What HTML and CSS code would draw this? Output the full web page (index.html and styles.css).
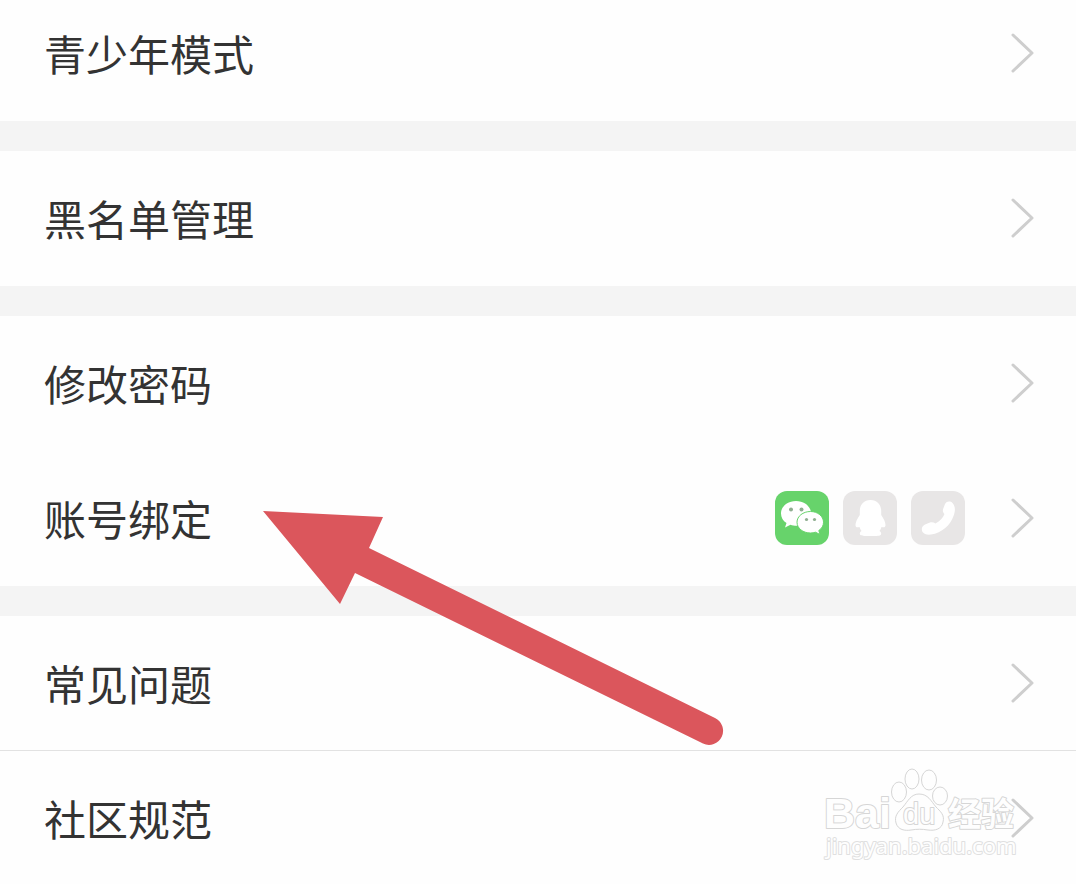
FILE: index.html
```html
<!DOCTYPE html>
<html lang="zh-CN">
<head>
    <meta charset="UTF-8">
    <meta name="viewport" content="width=device-width, initial-scale=1.0">
    <title>设置</title>
    <link rel="stylesheet" href="styles.css">
</head>
<body>
    <main class="settings">
        <section class="group">
            <a href="#" class="row">
                <span class="label">青少年模式</span>
                <svg class="chevron" viewBox="0 0 24 40"><path d="M2 2 L21 20 L2 38"/></svg>
            </a>
        </section>
        <section class="group">
            <a href="#" class="row">
                <span class="label">黑名单管理</span>
                <svg class="chevron" viewBox="0 0 24 40"><path d="M2 2 L21 20 L2 38"/></svg>
            </a>
        </section>
        <section class="group">
            <a href="#" class="row">
                <span class="label">修改密码</span>
                <svg class="chevron" viewBox="0 0 24 40"><path d="M2 2 L21 20 L2 38"/></svg>
            </a>
            <a href="#" class="row">
                <span class="label">账号绑定</span>
                <span class="accounts">
                    <svg class="account wechat" viewBox="0 0 54 54">
                        <path class="shape" d="M21 10 C12.500 10 6 15.500 6 22.500 C6 26.500 8 29.800 11.500 32 L10 36.500 L15.500 33.800 C18 34.700 22 35 24 34.500 C29 34 36 29 36 22.500 C36 15.500 29.500 10 21 10 Z"/>
                        <path class="shape front" d="M35.500 20.500 C28 20.500 22 25.300 22 31.200 C22 37.300 28 42 35.500 42 C37.300 42 39 41.700 40.500 41.200 L45 43.500 L43.800 39.500 C46.800 37.500 48.500 34.700 48.500 31.200 C48.500 25.300 42.700 20.500 35.500 20.500 Z"/>
                        <circle class="eye" cx="16" cy="18.500" r="2"/>
                        <circle class="eye" cx="26.500" cy="18.500" r="2"/>
                        <circle class="eye" cx="31.500" cy="28.500" r="1.600"/>
                        <circle class="eye" cx="39.500" cy="28.500" r="1.600"/>
                    </svg>
                    <svg class="account" viewBox="0 0 54 54">
                        <path class="shape" d="M27.500 9 C20.500 9 16.800 14 16.800 20 L16.800 24 C14 28 12.500 31.500 12.500 34 C12.500 36.500 14 36.500 16.500 36 C17 38 18 39 18.500 40 C17 41 16.500 42 17 43.500 C17.500 45 21 45 27.500 45 C34 45 37.500 45 38 43.500 C38.500 42 38 41 36.500 40 C37 39 38 38 38.500 36 C41 36.500 42.500 36.500 42.500 34 C42.500 31.500 41 28 38.200 24 L38.200 20 C38.200 14 34.500 9 27.500 9 Z"/>
                    </svg>
                    <svg class="account" viewBox="0 0 54 54">
                        <path class="shape" d="M34 13 C35.500 10 39.500 9.800 41.500 12 C45 16 44 21 42.500 25 C39.500 34 31 42 20 43.500 C16 44 13 43 11.500 41 C10 38 11 35 14 33.500 L19 31.500 C21 31 23 31.500 24.500 32.500 C29 30 32 27 33.500 23 C31.500 21 31.500 19 32.500 17 Z"/>
                    </svg>
                </span>
                <svg class="chevron" viewBox="0 0 24 40"><path d="M2 2 L21 20 L2 38"/></svg>
                <svg class="pointer" viewBox="0 0 462 236" aria-hidden="true">
                    <path d="M1 0 L121 6 L107 37 L453 207 A14 14 0 0 1 441 232.500 L93 62 L78 93 Z"/>
                </svg>
            </a>
        </section>
        <section class="group lined">
            <a href="#" class="row">
                <span class="label">常见问题</span>
                <svg class="chevron" viewBox="0 0 24 40"><path d="M2 2 L21 20 L2 38"/></svg>
            </a>
            <a href="#" class="row">
                <span class="label">社区规范</span>
                <svg class="chevron" viewBox="0 0 24 40"><path d="M2 2 L21 20 L2 38"/></svg>
            </a>
        </section>
        <svg class="watermark" viewBox="0 0 204 100">
            <text class="brand" x="4" y="64">Bai</text>
            <ellipse cx="79" cy="28" rx="7.500" ry="10"/>
            <ellipse cx="92" cy="15" rx="7" ry="10"/>
            <ellipse cx="109" cy="16" rx="7.500" ry="10"/>
            <ellipse cx="120" cy="32" rx="7.500" ry="9"/>
            <path d="M99 30 C91 30 88 37 83 43 C78 48 74 52 76 59 C78 66 85 67 91 66 C97 65 102 65 108 66 C115 67 122 65 123 58 C125 51 120 47 116 43 C111 37 108 30 99 30 Z"/>
            <text class="paw-text" x="83" y="60">du</text>
            <text class="brand-cn" x="128" y="62">经验</text>
            <text class="site" x="6" y="90">jingyan.baidu.com</text>
        </svg>
    </main>
</body>
</html>
```

FILE: styles.css
```css
* {
    box-sizing: border-box;
}

body {
    margin: 0;
    background: #fff;
    color: #333;
    font-family: "Noto Sans CJK SC", sans-serif;
    overflow: hidden;
}

/* the list is scrolled a little past its first row */
.settings {
    position: relative;
    margin-top: -14px;
    display: flex;
    flex-direction: column;
    gap: 30px;
    background: #f4f4f4;
}

.group {
    background: #fefefe;
}

.row {
    position: relative;
    display: flex;
    align-items: center;
    height: 135px;
    padding: 0 41px 2px 44px;
    color: inherit;
    text-decoration: none;
}

.lined .row + .row::before {
    content: '';
    position: absolute;
    top: -1px;
    left: 0;
    right: 0;
    height: 1px;
    background: #e2e2e2;
}

.label {
    flex: 1;
    font-size: 42px;
    line-height: 60px;
}

/* stays visible above the watermark */
.chevron {
    position: relative;
    z-index: 2;
    width: 24px;
    height: 40px;
    fill: none;
    stroke: #cecece;
    stroke-width: 3;
    stroke-linecap: round;
    stroke-linejoin: round;
}

.accounts {
    display: flex;
    gap: 14px;
    margin-right: 46px;
}

.account {
    width: 54px;
    height: 54px;
    border-radius: 12px;
    background: #e8e6e6;
}

.account .shape {
    fill: #fff;
}

.wechat {
    background: #67d36b;
}

.wechat .front {
    stroke: #67d36b;
    stroke-width: 1;
}

.wechat .eye {
    fill: #8fae90;
}

.pointer {
    position: absolute;
    z-index: 1;
    left: 262px;
    top: 60px;
    width: 462px;
    height: 236px;
    fill: #db565c;
    pointer-events: none;
}

.watermark {
    position: absolute;
    right: 52px;
    bottom: 22px;
    width: 204px;
    height: 100px;
    fill: #fefefe;
    stroke: #d6d6d6;
    stroke-width: 1;
    pointer-events: none;
}

.watermark text {
    stroke-width: 2;
    stroke-linejoin: round;
    paint-order: stroke;
}

.watermark .brand {
    font: bold 43px "Liberation Sans", sans-serif;
}

.watermark .paw-text {
    font: 29px "Liberation Sans", sans-serif;
}

.watermark .brand-cn {
    font: bold 33px "Noto Sans CJK SC", sans-serif;
}

.watermark .site {
    font: 22px "Noto Sans", sans-serif;
    stroke: #e0e0e0;
}
```
